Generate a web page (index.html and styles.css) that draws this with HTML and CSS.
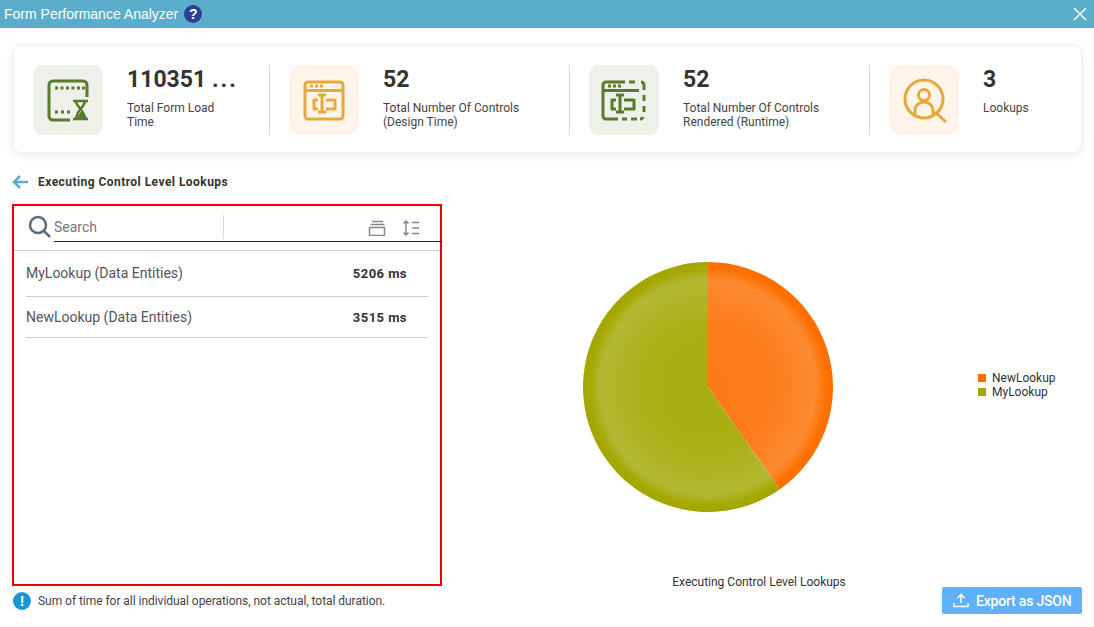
FILE: index.html
```html
<!DOCTYPE html>
<html>
<head lang="en">
    <meta charset="UTF-8">
    <title>Form Performance Analyzer</title>
    <link rel="stylesheet" href="styles.css">
</head>
<body>
    <div class="titlebar">
        <span class="title">Form Performance Analyzer</span>
        <span class="help">?</span>
        <svg class="close" width="14" height="14" viewBox="0 0 14 14"><path d="M1 1l12 12M13 1L1 13"/></svg>
    </div>

    <div class="stats">
        <div class="stat first">
            <div class="tile green">
                <svg width="70" height="70" viewBox="0 0 70 70">
                    <path class="line" d="M54 32V20a4 4 0 0 0-4-4H20a4 4 0 0 0-4 4v31a4 4 0 0 0 4 4h17"/>
                    <path class="dots" d="M22 23h3M27.500 23h3M33 23h3M38.500 23h3M44 23h3M49 23h3M22 47h3M28 47h3M34 47h3"/>
                    <path class="line thin" d="M40 36h15M40 54h15M43 36c0 6 8 8 9 18M52 36c0 6-8 8-9 18"/>
                    <path class="fill" d="M43 54l4.500-7 3 0 4 7z"/>
                </svg>
            </div>
            <div class="info">
                <div class="num">110351 <span class="more">...</span></div>
                <div class="label">Total Form Load Time</div>
            </div>
        </div>
        <div class="stat second">
            <div class="tile orange">
                <svg width="70" height="70" viewBox="0 0 70 70">
                    <rect class="line" x="16" y="17" width="38" height="37" rx="3"/>
                    <path class="line" d="M16 25.500h38"/>
                    <path class="dots" d="M21 21h3M26 21h3M31 21h3"/>
                    <path class="line" d="M29 35h-4v9h4M37 35h9v9h-9M29 30h8M29 47h8M33 30v17"/>
                </svg>
            </div>
            <div class="info">
                <div class="num">52</div>
                <div class="label">Total Number Of Controls (Design Time)</div>
            </div>
        </div>
        <div class="stat second">
            <div class="tile green">
                <svg width="70" height="70" viewBox="0 0 70 70">
                    <path class="line" d="M36 17H17a3 3 0 0 0-3 3v31a3 3 0 0 0 3 3h12"/>
                    <path class="line" d="M14 25.500h36"/>
                    <path class="line" d="M40 17h6M33 54h5M42 54h6M51 54a3 3 0 0 0 3-2M55 47v-6M55 36v-6M55 25v-5a3 3 0 0 0-3-3"/>
                    <path class="dots" d="M19 21h3M24 21h3M29 21h3"/>
                    <path class="line" d="M27 35h-4v9h4M35 35h10v9H35M27 30h8M27 47h8M31 30v17"/>
                </svg>
            </div>
            <div class="info">
                <div class="num">52</div>
                <div class="label">Total Number Of Controls Rendered (Runtime)</div>
            </div>
        </div>
        <div class="stat last">
            <div class="tile orange">
                <svg width="70" height="70" viewBox="0 0 70 70">
                    <circle class="line" cx="35" cy="34" r="19"/>
                    <path class="line" d="M46 47l11 10"/>
                    <circle class="line" cx="35" cy="30" r="5.500"/>
                    <path class="line" d="M26 49v-4a9 8 0 0 1 18 0v4"/>
                </svg>
            </div>
            <div class="info">
                <div class="num">3</div>
                <div class="label">Lookups</div>
            </div>
        </div>
    </div>

    <div class="crumb">
        <svg width="18" height="14" viewBox="0 0 18 14"><path d="M16 7H2M8 1L2 7l6 6"/></svg>
        <span>Executing Control Level Lookups</span>
    </div>

    <div class="main">
        <div class="panel">
            <div class="toolbar">
                <svg class="search-icon" width="24" height="24" viewBox="0 0 24 24"><circle cx="10" cy="10" r="8"/><path d="M16 16l6 6"/></svg>
                <input class="search" type="text" placeholder="Search">
                <span class="sep"></span>
                <svg class="tool one" width="18" height="16" viewBox="0 0 18 16"><path d="M4 1.500h11M2.500 4.500h14"/><rect x="1.500" y="7.500" width="15" height="8"/></svg>
                <svg class="tool" width="18" height="16" viewBox="0 0 18 16"><path d="M4 1v14M1.500 3.500L4 1l2.500 2.500M1.500 12.500L4 15l2.500-2.500M10 2.500h7M10 8h7M10 13.500h7"/></svg>
            </div>
            <div class="row tall"><span>MyLookup (Data Entities)</span><b>5206 ms</b></div>
            <div class="row"><span>NewLookup (Data Entities)</span><b>3515 ms</b></div>
        </div>

        <div class="chart">
            <div class="plot">
                <svg class="pie" width="250" height="250" viewBox="-125 -125 250 250">
                    <defs>
                        <radialGradient id="gradOrange" gradientUnits="userSpaceOnUse" cx="0" cy="0" r="125">
                            <stop offset="0" stop-color="#fc7b18"/>
                            <stop offset="0.5" stop-color="#fc7c1c"/>
                            <stop offset="0.86" stop-color="#fd8a30"/>
                            <stop offset="0.95" stop-color="#ff7000"/>
                            <stop offset="1" stop-color="#ff6f00"/>
                        </radialGradient>
                        <radialGradient id="gradOlive" gradientUnits="userSpaceOnUse" cx="0" cy="0" r="125">
                            <stop offset="0" stop-color="#a8ad10"/>
                            <stop offset="0.5" stop-color="#aaaf14"/>
                            <stop offset="0.86" stop-color="#b3b833"/>
                            <stop offset="0.95" stop-color="#a4a800"/>
                            <stop offset="1" stop-color="#a3a600"/>
                        </radialGradient>
                    </defs>
                    <path fill="url(#gradOrange)" d="M0 0V-125A125 125 0 0 1 71.700 102.400Z"/>
                    <path fill="url(#gradOlive)" d="M0 0L71.700 102.400A125 125 0 1 1 0 -125Z"/>
                </svg>
                <div class="legend">
                    <div class="key"><i class="k1"></i>NewLookup</div>
                    <div class="key"><i class="k2"></i>MyLookup</div>
                </div>
            </div>
            <div class="chart-title">Executing Control Level Lookups</div>
        </div>
    </div>

    <div class="foot">
        <span class="bang">!</span>
        <span class="note">Sum of time for all individual operations, not actual, total duration.</span>
        <button class="export">
            <svg width="16" height="15" viewBox="0 0 16 15"><path d="M8 10V1.500M4.500 5L8 1.500 11.500 5M1 10v3.500h14V10"/></svg>
            Export as JSON
        </button>
    </div>
</body>
</html>
```

FILE: styles.css
```css
*{
    box-sizing: border-box;
}
body{
    margin: 0;
    height: 627px;
    overflow: hidden;
    background-color: #fff;
    font-family: Roboto, "Liberation Sans", sans-serif;
    color: #333;
}
.titlebar{
    display: flex;
    align-items: center;
    height: 28px;
    padding-left: 4px;
    background-color: #5aaeca;
    color: #fff;
}
.title{
    font-family: "Liberation Sans", sans-serif;
    font-size: 14px;
}
.help{
    width: 18px;
    height: 18px;
    margin-left: 6px;
    border-radius: 50%;
    background-color: #2f3f97;
    font: bold 14px/18px "Liberation Sans", sans-serif;
    text-align: center;
}
.close{
    margin-left: auto;
    margin-right: 7px;
    fill: none;
    stroke: #fff;
    stroke-width: 1.5;
}

.stats{
    display: flex;
    height: 108px;
    margin: 17px 12px 0 13px;
    padding: 20px;
    border: 1px solid #f0f0f0;
    border-radius: 8px;
    background-color: #fff;
    box-shadow: 0 2px 10px rgba(0,0,0,.08);
}
.stat{
    flex: none;
    display: flex;
    height: 70px;
    margin-top: -1px;
}
.first{width: 237px; margin-left: -1px; border-right: 1px solid #d5d8dc;}
.second{width: 300px; padding-left: 19px; border-right: 1px solid #d5d8dc;}
.last{padding-left: 19px;}
.tile{
    flex: none;
    width: 70px;
    height: 70px;
    border-radius: 10px;
}
.tile svg{display: block;}
.green{background-color: #eef1ea; --ink: #5a7a2e;}
.orange{background-color: #fef4e9; --ink: #e5a93e;}
.line{
    fill: none;
    stroke: var(--ink);
    stroke-width: 3;
    stroke-linejoin: round;
}
.thin{stroke-width: 2.500;}
.dots{
    fill: none;
    stroke: var(--ink);
    stroke-width: 3;
}
.fill{fill: var(--ink);}
.info{
    width: 150px;
    margin-left: 24px;
}
.first .info{width: 112px;}
.last .info{width: 90px;}
.num{
    height: 30px;
    font-size: 23px;
    font-weight: bold;
    line-height: 30px;
    white-space: nowrap;
}
.more{letter-spacing: 2px;}
.label{
    margin-top: 6px;
    font-size: 12px;
    line-height: 14px;
    color: #444;
}

.crumb{
    display: flex;
    align-items: center;
    height: 18px;
    margin: 20px 0 0 12px;
    font-size: 12px;
    font-weight: bold;
    letter-spacing: .45px;
}
.crumb svg{
    fill: none;
    stroke: #5aaeca;
    stroke-width: 2.500;
    margin-right: 8px;
}

.main{
    display: flex;
    height: 382px;
    margin-top: 13px;
    margin-left: 12px;
}
.panel{
    flex: none;
    width: 430px;
    height: 382px;
    border: 2px solid #ec0000;
}
.toolbar{
    display: flex;
    align-items: flex-start;
    height: 45px;
    padding: 9px 0 0 14px;
    border-bottom: 1px solid #c9d0d6;
}
.search-icon{
    flex: none;
    fill: none;
    stroke: #5b6b80;
    stroke-width: 2.500;
}
.search{
    flex: none;
    width: 388px;
    height: 27px;
    margin-left: 2px;
    margin-right: -219px;
    padding: 0 0 2px;
    border: none;
    border-bottom: 1px solid #222;
    outline: none;
    background: transparent;
    font: 14px Roboto, "Liberation Sans", sans-serif;
}
.search::placeholder{color: #777;}
.sep{
    width: 1px;
    height: 24px;
    background-color: #d8d8d8;
}
.tool{
    margin-top: 5px;
    fill: none;
    stroke: #888;
    stroke-width: 1.500;
}
.tool.one{margin-left: 144px; margin-right: 16px;}
.row{
    display: flex;
    justify-content: space-between;
    align-items: center;
    height: 41px;
    margin: 0 12px;
    padding-right: 21px;
    border-bottom: 1px solid #c9cdd2;
    font-size: 14px;
    color: #555;
}
.tall{height: 46px; padding-bottom: 1px;}
.row b{
    font-size: 13px;
    letter-spacing: .45px;
    color: #333;
}

.chart{
    flex: 1;
    display: flex;
    flex-direction: column;
}
.plot{
    display: flex;
    align-items: center;
    height: 250px;
    margin-top: 58px;
    margin-left: 141px;
}
.legend{
    margin-left: 145px;
    margin-bottom: 4px;
    font-size: 12px;
    line-height: 14px;
}
.key{
    display: flex;
    align-items: center;
}
.key i{
    width: 8px;
    height: 8px;
    margin-right: 6px;
}
.k1{background-color: #ff6f00;}
.k2{background-color: #a3a600;}
.chart-title{
    margin-top: 62px;
    padding-right: 18px;
    font-size: 12px;
    line-height: 16px;
    text-align: center;
}

.foot{
    display: flex;
    align-items: center;
    margin: 1px 12px 0 13px;
    height: 27px;
}
.bang{
    width: 18px;
    height: 18px;
    border-radius: 50%;
    background-color: #1a96d0;
    color: #fff;
    font: bold 14px/18px "Liberation Sans", sans-serif;
    text-align: center;
}
.note{
    margin-left: 7px;
    font-size: 12px;
    letter-spacing: -.04px;
    color: #444;
}
.export{
    display: flex;
    align-items: center;
    width: 140px;
    height: 27px;
    margin-left: auto;
    padding: 0 0 0 11px;
    border: none;
    border-radius: 2px;
    background-color: #60b1fb;
    color: #fff;
    font: 500 14px Roboto, "Liberation Sans", sans-serif;
    letter-spacing: -.2px;
}
.export svg{
    margin-right: 7px;
    fill: none;
    stroke: #fff;
    stroke-width: 1.500;
}
```
